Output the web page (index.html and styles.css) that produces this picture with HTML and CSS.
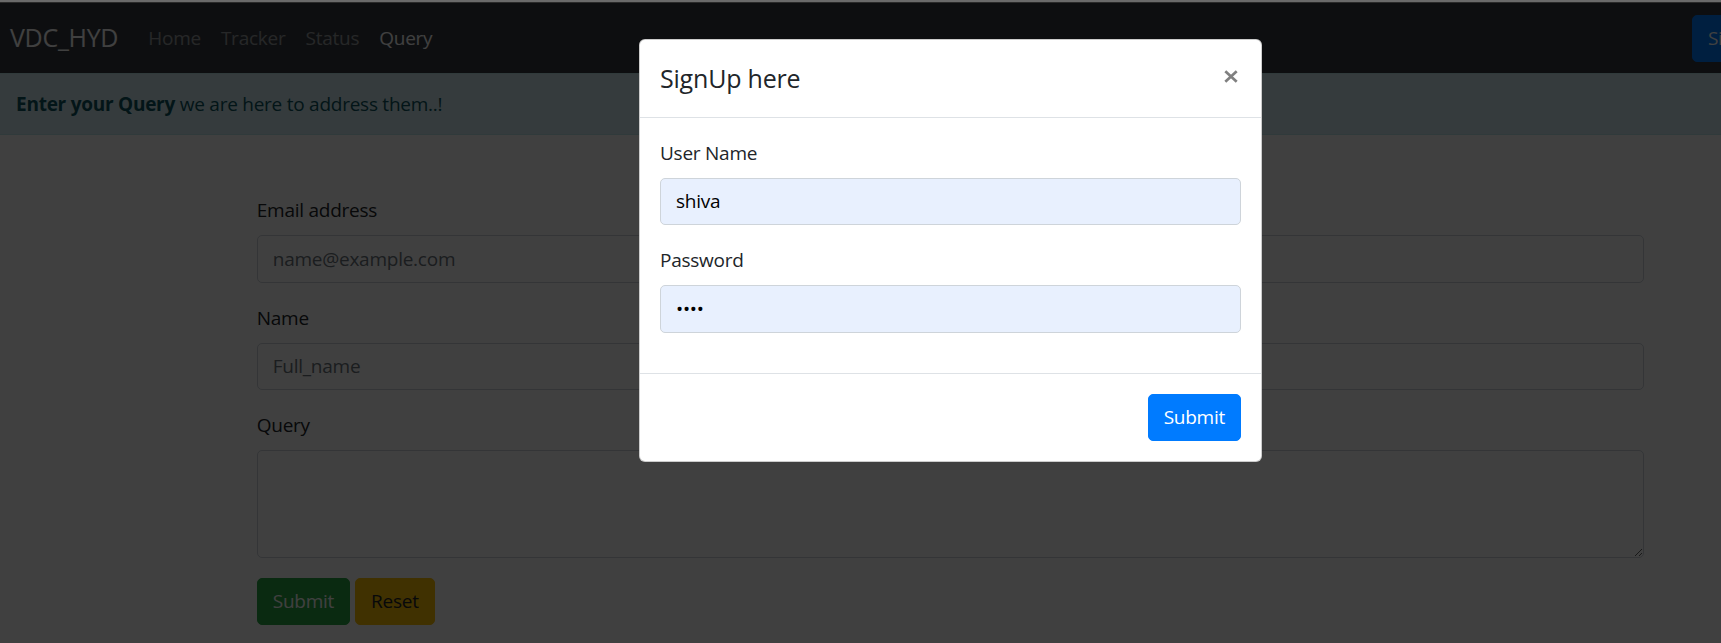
FILE: index.html
```html
<!DOCTYPE html>
<html lang="en">
<head>
<meta charset="utf-8">
<title>VDC_HYD - Query</title>
<link rel="stylesheet" href="styles.css">
</head>
<body>
<div class="chrome-line"></div>
<div class="page">
  <nav class="navbar">
    <a class="brand" href="#">VDC_HYD</a>
    <ul class="nav">
      <li><a class="nav-link" href="#">Home</a></li>
      <li><a class="nav-link" href="#">Tracker</a></li>
      <li><a class="nav-link" href="#">Status</a></li>
      <li><a class="nav-link active" href="#">Query</a></li>
    </ul>
    <div class="nav-actions">
      <button class="btn btn-primary" type="button">SignUp</button>
      <button class="btn btn-success" type="button">Login</button>
    </div>
  </nav>

  <div class="alert"><strong>Enter your Query</strong> we are here to address them..!</div>

  <form class="container query-form">
    <div class="form-group">
      <label class="label" for="email">Email address</label>
      <input class="form-control" id="email" type="email" placeholder="name@example.com">
    </div>
    <div class="form-group">
      <label class="label" for="fullname">Name</label>
      <input class="form-control" id="fullname" type="text" placeholder="Full_name">
    </div>
    <div class="form-group">
      <label class="label" for="query">Query</label>
      <textarea class="form-control textarea" id="query" rows="3"></textarea>
    </div>
    <div class="form-actions">
      <button class="btn btn-success" type="button">Submit</button>
      <button class="btn btn-warning" type="button">Reset</button>
    </div>
  </form>

  <div class="backdrop"></div>

  <div class="modal">
    <div class="modal-dialog">
      <div class="modal-content">
        <div class="modal-header">
          <h5 class="modal-title">SignUp here</h5>
          <button class="close" type="button" aria-label="Close">
            <svg width="14" height="13" viewBox="0 0 14 13" aria-hidden="true">
              <path d="M1.3 1.2 L12.7 11.8 M12.7 1.2 L1.3 11.8" stroke="#808080" stroke-width="2.7" stroke-linecap="butt" fill="none"/>
            </svg>
          </button>
        </div>
        <div class="modal-body">
          <div class="form-group">
            <label class="label" for="uname">User Name</label>
            <input class="form-control filled" id="uname" type="text" value="shiva">
          </div>
          <div class="form-group">
            <label class="label" for="pwd">Password</label>
            <input class="form-control filled" id="pwd" type="password" value="abcd">
          </div>
        </div>
        <div class="modal-footer">
          <button class="btn btn-primary" type="button">Submit</button>
        </div>
      </div>
    </div>
  </div>
</div>
</body>
</html>
```

FILE: styles.css
```css
html, body {
  margin: 0;
  padding: 0;
  overflow: hidden;
  background: #404040;
}

body {
  font-family: "Segoe UI", "Open Sans", "Noto Sans", sans-serif;
  font-size: 19px;
  letter-spacing: -0.25px;
  line-height: 30px;
  color: #212529;
}

.chrome-line {
  height: 3px;
  background: linear-gradient(to bottom, #6a6a6a 0, #6a6a6a 2px, #2a2a2a 2px);
}

.page {
  position: relative;
  width: 1901px;
  min-height: 640px;
  background: #ffffff;
}

/* Navbar */
.navbar {
  display: flex;
  align-items: center;
  height: 70px;
  padding: 0 10px;
  background: #343a40;
}

.brand {
  font-size: 25px;
  letter-spacing: -0.3px;
  line-height: 37.5px;
  color: #ffffff;
  text-decoration: none;
  margin-right: 20px;
}

.nav {
  display: flex;
  list-style: none;
  margin: 0;
  padding: 0;
}

.nav-link {
  display: block;
  padding: 10px 10px;
  color: rgba(255, 255, 255, 0.5);
  text-decoration: none;
}

.nav-link.active {
  color: #ffffff;
}

.nav-actions {
  margin-left: auto;
  margin-right: 17px;
  display: flex;
  gap: 10px;
}

/* Buttons */
.btn {
  font-family: inherit;
  font-size: 19px;
  letter-spacing: -0.25px;
  line-height: 30px;
  padding: 7.5px 15px;
  border: 1.25px solid transparent;
  border-radius: 5px;
  cursor: pointer;
}

.btn-primary {
  background: #007bff;
  border-color: #007bff;
  color: #ffffff;
}

.btn-success {
  background: #28a745;
  border-color: #28a745;
  color: #ffffff;
}

.btn-warning {
  background: #ffc107;
  border-color: #ffc107;
  color: #212529;
}

/* Alert */
.alert {
  background: #d1ecf1;
  color: #0c5460;
  border-top: 1.25px solid #bee5eb;
  border-bottom: 1.25px solid #bee5eb;
  padding: 15px 16px;
}

.alert strong {
  font-weight: 700;
}

/* Form */
.container {
  max-width: 1387.5px;
  margin-left: auto;
  margin-right: auto;
}

.query-form {
  margin-top: 60px;
}

.form-group {
  margin-bottom: 20px;
}

.label {
  display: block;
  margin-bottom: 10px;
}

.form-control {
  display: block;
  box-sizing: border-box;
  width: 100%;
  height: 47.5px;
  padding: 7.5px 15px;
  font-family: inherit;
  font-size: 19px;
  letter-spacing: -0.25px;
  line-height: 30px;
  color: #495057;
  background: #ffffff;
  border: 1.25px solid #ced4da;
  border-radius: 5px;
  margin: 0;
}

.form-control::placeholder {
  color: #6c757d;
  opacity: 1;
}

.textarea {
  height: 107.5px;
  resize: vertical;
}

.form-actions {
  display: flex;
  gap: 5px;
}

/* Modal */
.backdrop {
  position: absolute;
  inset: 0;
  background: rgba(0, 0, 0, 0.75);
}

.modal {
  position: absolute;
  inset: 0;
}

.modal-dialog {
  width: 623px;
  margin: 36px auto 0;
}

.modal-content {
  background: #ffffff;
  border: 1.25px solid rgba(0, 0, 0, 0.2);
  border-radius: 6px;
}

.modal-header {
  display: flex;
  align-items: center;
  padding: 20px;
  border-bottom: 1.25px solid #dee2e6;
}

.modal-title {
  margin: 0;
  font-size: 25px;
  letter-spacing: -0.2px;
  line-height: 36.5px;
  font-weight: 400;
  color: #212529;
}

.close {
  margin-left: auto;
  margin-right: 3px;
  margin-bottom: 4px;
  padding: 0;
  border: 0;
  background: none;
  display: flex;
  cursor: pointer;
}

.modal-body {
  padding: 20px;
}

.form-control.filled {
  background: #e8f0fe;
  color: #000000;
}

.modal-footer {
  display: flex;
  justify-content: flex-end;
  padding: 15px;
  border-top: 1.25px solid #dee2e6;
}

.modal-footer .btn {
  margin: 5px;
}
```
